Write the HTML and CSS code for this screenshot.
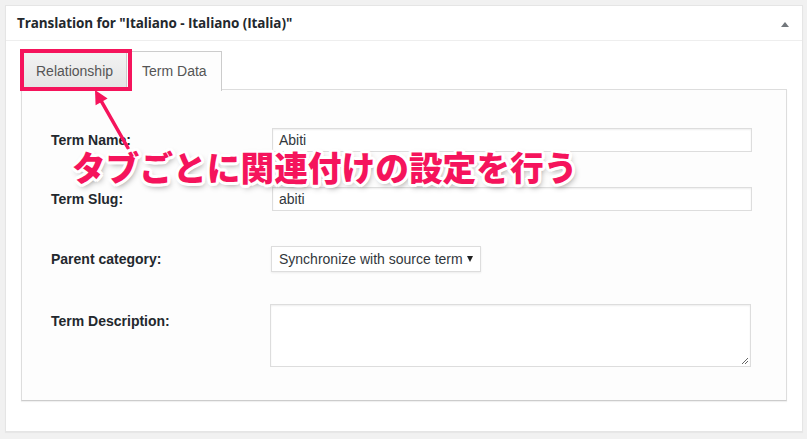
FILE: index.html
```html
<!DOCTYPE html>
<html lang="en">
<head>
<meta charset="utf-8">
<title>Translation</title>
<link rel="stylesheet" href="styles.css">
</head>
<body>
<div class="postbox">
  <div class="postbox-header">
    <h2 class="postbox-title">Translation for "Italiano - Italiano (Italia)"</h2>
    <span class="toggle" aria-hidden="true"></span>
  </div>
  <div class="postbox-inside">
    <div class="tabs">
      <div class="tab">Relationship</div>
      <div class="tab tab-active">Term Data</div>
    </div>
    <div class="panel">
      <div class="fields">
        <div class="row">
          <label class="label">Term Name:</label>
          <div class="input">Abiti</div>
        </div>
        <div class="row">
          <label class="label">Term Slug:</label>
          <div class="input">abiti</div>
        </div>
        <div class="row">
          <label class="label">Parent category:</label>
          <div class="select"><span>Synchronize with source term</span><span class="caret"></span></div>
        </div>
        <div class="row row-desc">
          <label class="label">Term Description:</label>
          <div class="textarea">
            <svg class="grip" width="10" height="10" viewBox="0 0 10 10"><path d="M9 3 L3 9 M9 6 L6 9" stroke="#666" stroke-width="1"/></svg>
          </div>
        </div>
      </div>
    </div>
  </div>

  <div class="callout-box"></div>
  <svg class="callout-arrow" width="200" height="200" viewBox="0 0 200 200">
    <line x1="128" y1="148" x2="101.4" y2="101.3" stroke="#f5145c" stroke-width="3.5" stroke-linecap="round"/>
    <polygon points="95,90 107.6,98.4 95.6,105.2" fill="#f5145c"/>
  </svg>
  <div class="callout-text">タブごとに関連付けの設定を行う</div>
</div>
</body>
</html>
```

FILE: styles.css
```css
html, body {
  margin: 0;
  padding: 0;
}
body {
  background: #f1f1f1;
  font-family: "Liberation Sans", Arial, sans-serif;
  color: #23282d;
  width: 807px;
  height: 439px;
  overflow: hidden;
}
.postbox {
  position: relative;
  margin: 5px 0 0 5px;
  width: 798px;
  height: 427px;
  box-sizing: border-box;
  background: #fff;
  border: 1px solid #e5e5e5;
  box-shadow: 0 1px 1px rgba(0,0,0,0.04);
}
.postbox-header {
  height: 34px;
  border-bottom: 1px solid #eeeeee;
  display: flex;
  align-items: center;
  justify-content: space-between;
  padding: 0 13px 0 11px;
}
.postbox-title {
  margin: 0;
  font-family: "Open Sans", "DejaVu Sans", sans-serif;
  font-weight: 700;
  font-size: 13.5px;
  color: #23282d;
  letter-spacing: -0.1px;
}
.toggle {
  width: 0;
  height: 0;
  border-left: 4px solid transparent;
  border-right: 4px solid transparent;
  border-bottom: 5px solid #72777c;
  margin-top: 2px;
}
.postbox-inside {
  padding: 10px 15px 30px 15px;
}
.tabs {
  display: flex;
  height: 39px;
  position: relative;
  z-index: 1;
}
.tab {
  box-sizing: border-box;
  height: 39px;
  line-height: 39px;
  padding: 0 13px 0 14px;
  border: 1px solid #cccccc;
  border-bottom: none;
  font-size: 14px;
  color: #555;
  background: linear-gradient(#f3f3f3, #e4e4e4);
}
.tab-active {
  background: #fdfdfd;
  height: 40px;
  line-height: 38px;
  margin-top: 0;
  border-left: none;
  padding: 0 14px 0 15px;
}
.panel {
  margin-top: -1px;
  height: 312px;
  box-sizing: border-box;
  background: #fdfdfd;
  border: 1px solid #dddddd;
  border-bottom-color: #cccccc;
  box-shadow: 0 1px 1px rgba(0,0,0,0.06);
  padding: 38px 0 0 29px;
}
.fields {
  display: flex;
  flex-direction: column;
  gap: 35px;
}
.row {
  display: grid;
  grid-template-columns: 221px 480px;
  align-items: center;
}
.row-desc {
  margin-top: -3px;
  align-items: start;
}
.row-desc .label {
  padding-top: 9px;
}
.label {
  font-weight: 700;
  font-size: 14px;
  color: #23282d;
}
.input {
  box-sizing: border-box;
  height: 24px;
  border: 1px solid #dddddd;
  box-shadow: inset 0 1px 2px rgba(0,0,0,0.07);
  background: #fff;
  font-size: 14px;
  line-height: 22px;
  padding: 0 6px;
  color: #32373c;
}
.select {
  box-sizing: border-box;
  width: 210px;
  height: 26px;
  margin-left: -1px;
  border: 1px solid #dddddd;
  background: #fff;
  box-shadow: 0 1px 2px rgba(0,0,0,0.07);
  font-size: 14px;
  color: #32373c;
  display: flex;
  align-items: center;
  justify-content: space-between;
  padding: 0 7px 0 7px;
}
.caret {
  width: 0;
  height: 0;
  border-left: 3px solid transparent;
  border-right: 3px solid transparent;
  border-top: 6px solid #222;
  margin-top: -1px;
}
.textarea {
  position: relative;
  box-sizing: border-box;
  width: 481px;
  height: 63px;
  margin-left: -2px;
  border: 1px solid #dddddd;
  box-shadow: inset 0 1px 2px rgba(0,0,0,0.07);
  background: #fff;
}
.grip {
  position: absolute;
  right: 1px;
  bottom: 1px;
}
.callout-box {
  position: absolute;
  left: 14px;
  top: 43px;
  width: 112px;
  height: 42px;
  box-sizing: border-box;
  border: 4px solid #f5145c;
  z-index: 2;
}
.callout-arrow {
  position: absolute;
  left: -6px;
  top: -6px;
  z-index: 3;
}
.callout-text {
  position: absolute;
  left: 66px;
  top: 144px;
  z-index: 4;
  font-family: "Noto Sans CJK JP", sans-serif;
  font-weight: 900;
  font-size: 33.7px;
  line-height: 1;
  color: #f5145c;
  white-space: nowrap;
  text-shadow:
    2px 0 0 #fff, -2px 0 0 #fff, 0 2px 0 #fff, 0 -2px 0 #fff,
    2px 2px 0 #fff, -2px -2px 0 #fff, 2px -2px 0 #fff, -2px 2px 0 #fff,
    3px 1px 0 #fff, -3px 1px 0 #fff, 1px 3px 0 #fff, 1px -3px 0 #fff,
    -3px -1px 0 #fff, 3px -1px 0 #fff, -1px 3px 0 #fff, -1px -3px 0 #fff,
    2px 3px 6px rgba(0,0,0,0.45);
}
```
